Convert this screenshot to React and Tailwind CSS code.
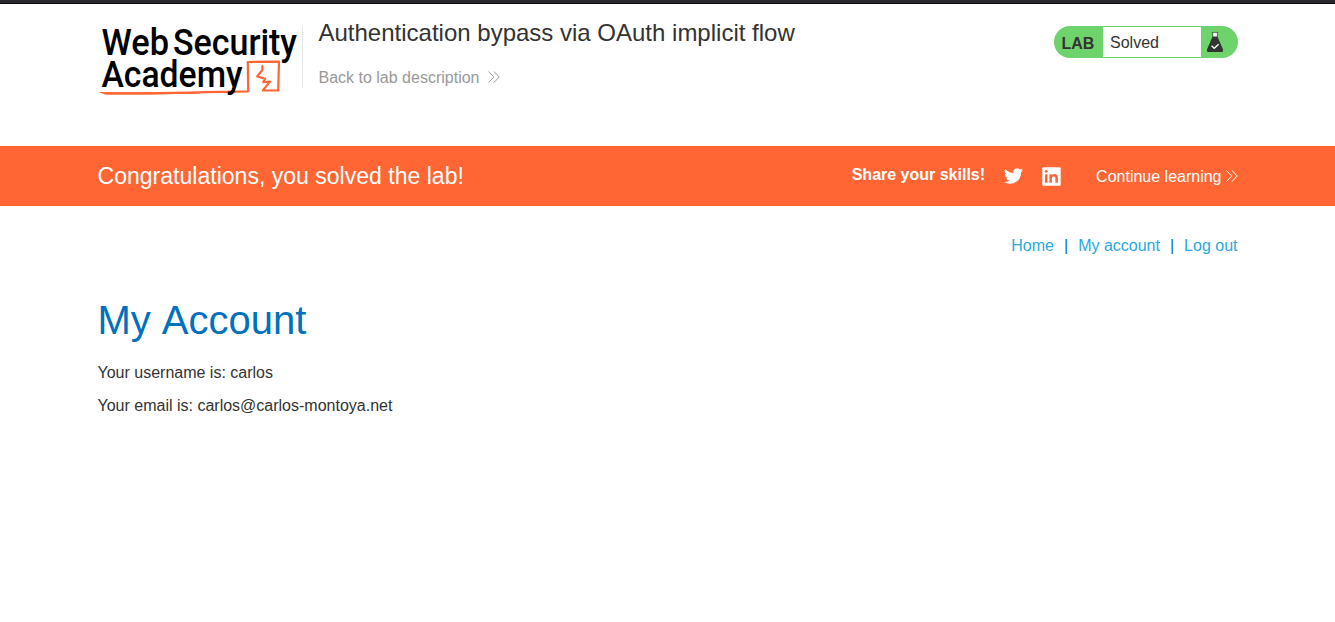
import React from "react";

function Logo() {
  return (
    <svg width="205" height="88" viewBox="97 14 205 88" className="block shrink-0 overflow-visible" role="img" aria-label="Web Security Academy">
      <g fill="none" stroke="#ff6633" strokeLinecap="round" strokeLinejoin="round">
        <path d="M107 93.4 C150 93.8 205 92.2 248.2 91.3 L247.8 62 L279 61.6 L278.2 90.5 L262.8 90.5 L270 81.6 L263.2 82.2 L265 78.8 L257.2 76.4 L262.4 70 L262.4 66" strokeWidth="2.2" />
      </g>
      <path d="M98.5 92 L150 92.6 L200 92 L200 93.6 L150 94.6 L105 94.6 Z" fill="#ff6633" />
      <g fill="#000000" fontFamily="Roboto, sans-serif" fontSize="37.5" fontWeight="500">
        <text x="101.5" y="54.8" textLength="67.5" lengthAdjust="spacingAndGlyphs">Web</text>
        <text x="173" y="54.8" textLength="124" lengthAdjust="spacingAndGlyphs">Security</text>
        <text x="101.5" y="87.4" textLength="141" lengthAdjust="spacingAndGlyphs">Academy</text>
      </g>
    </svg>
  );
}

function DoubleChevron({ className }) {
  return (
    <svg width="12" height="12" viewBox="0 0 12 12" className={className} fill="none" stroke="currentColor" strokeWidth="1" aria-hidden="true">
      <path d="M0.6 0.5 L5.8 6 L0.6 11.5 M6 0.5 L11.2 6 L6 11.5" />
    </svg>
  );
}

function Flask() {
  return (
    <svg width="18" height="22" viewBox="0 0 18 22" className="block" aria-hidden="true">
      <path d="M7 1.5 H11 V6 H7 Z" fill="#ffffff" />
      <path d="M5.8 1.4 H12.2" stroke="#333332" strokeWidth="0.6" />
      <path d="M6.7 1.5 V6 M11.3 1.5 V6" stroke="#333332" strokeWidth="0.6" />
      <path d="M6.6 5.6 H11.4 L17 18.5 Q17.6 21 15.9 21 H2.1 Q0.4 21 1 18.5 Z" fill="#333332" />
      <path d="M5.6 14.8 L8.2 17.2 L12.6 13.2" fill="none" stroke="#ffffff" strokeWidth="1.4" />
    </svg>
  );
}

function Twitter() {
  return (
    <svg width="19" height="20" viewBox="0 0 24 24" className="block" fill="#ffffff" aria-hidden="true">
      <path d="M23.95 4.57a10 10 0 0 1-2.82.77 4.96 4.96 0 0 0 2.16-2.72c-.95.55-2 .95-3.13 1.18a4.92 4.92 0 0 0-8.38 4.48C7.69 8.1 4.07 6.13 1.64 3.16a4.9 4.9 0 0 0 1.52 6.57 4.9 4.9 0 0 1-2.23-.61v.06a4.92 4.92 0 0 0 3.95 4.83 5 5 0 0 1-2.21.08 4.94 4.94 0 0 0 4.6 3.42A9.87 9.87 0 0 1 0 19.54a14 14 0 0 0 7.55 2.21c9.05 0 14-7.5 14-13.98 0-.21 0-.42-.02-.63a9.94 9.94 0 0 0 2.46-2.55z" />
    </svg>
  );
}

function LinkedIn() {
  return (
    <svg width="19" height="19" viewBox="0 0 19 19" className="block" aria-hidden="true">
      <rect width="18.4" height="18.4" x="0.3" y="0.3" rx="1" fill="#ffffff" />
      <path d="M3 7.2H5.5V15.8H3Z M7.4 7.2H9.9V8.4C11.5 6.2 15.9 6.6 15.9 10.8V15.8H13.4V11.3C13.4 8.7 9.9 8.8 9.9 11.3V15.8H7.4Z" fill="#ff6633" />
      <circle cx="4.25" cy="4.4" r="1.45" fill="#ff6633" />
    </svg>
  );
}

export default function App() {
  return (
    <div className="h-[622px] w-[1335px] overflow-hidden bg-white font-['Liberation_Sans',Arial,sans-serif] text-base text-[#333332]">
      <div className="h-1 border-b border-[#0c0c0d] bg-[#2b2a33]" />
      <header className="mx-auto flex h-[142px] w-[1140px] items-start">
        <div className="-ml-px pt-[10px]">
          <Logo />
        </div>
        <div className="mt-[22px] h-[62px] w-px bg-[#e6e6e6]" />
        <div className="flex flex-col pl-4 pt-[13px]">
          <h2 className="text-2xl leading-8">Authentication bypass via OAuth implicit flow</h2>
          <a className="mt-[17px] flex items-center leading-6 text-[#999999]">
            Back to lab description
            <DoubleChevron className="mb-[2px] ml-[9px]" />
          </a>
        </div>
        <div className="ml-auto mt-[22px] flex h-8 w-[184px] overflow-hidden rounded-full bg-[#6fd36c]">
          <div className="w-[49px] pl-2 pt-[2px] font-bold leading-8">LAB</div>
          <div className="my-px w-[98px] bg-white pl-[7.5px] leading-[31px]">Solved</div>
          <div className="pl-[5px] pt-[5px]">
            <Flask />
          </div>
        </div>
      </header>
      <section className="h-[60px] bg-[#ff6633] text-white">
        <div className="mx-auto flex h-full w-[1140px] items-center">
          <h4 className="text-[23px] leading-8 tracking-[0.02px]">Congratulations, you solved the lab!</h4>
          <div className="ml-auto flex items-center">
            <span className="mb-[3px] font-bold">Share your skills!</span>
            <span className="ml-[19px]">
              <Twitter />
            </span>
            <span className="ml-[19px]">
              <LinkedIn />
            </span>
            <a className="ml-[35px] flex items-center">
              <span className="pt-[2px]">Continue learning</span>
              <DoubleChevron className="ml-1" />
            </a>
          </div>
        </div>
      </section>
      <main className="mx-auto w-[1140px]">
        <nav className="flex justify-end pt-[28px] leading-6 text-[#29a9df]">
          <a>Home</a>
          <span className="mx-[10px] text-[#0071bc]">|</span>
          <a>My account</a>
          <span className="mx-[10px] text-[#0071bc]">|</span>
          <a>Log out</a>
        </nav>
        <h1 className="mt-[38px] text-[40px] leading-[48px] text-[#0071bc] [word-spacing:2px]">My Account</h1>
        <p className="mt-[17px] leading-6">Your username is: carlos</p>
        <p className="mt-[9px] leading-6">Your email is: carlos@carlos-montoya.net</p>
      </main>
    </div>
  );
}
